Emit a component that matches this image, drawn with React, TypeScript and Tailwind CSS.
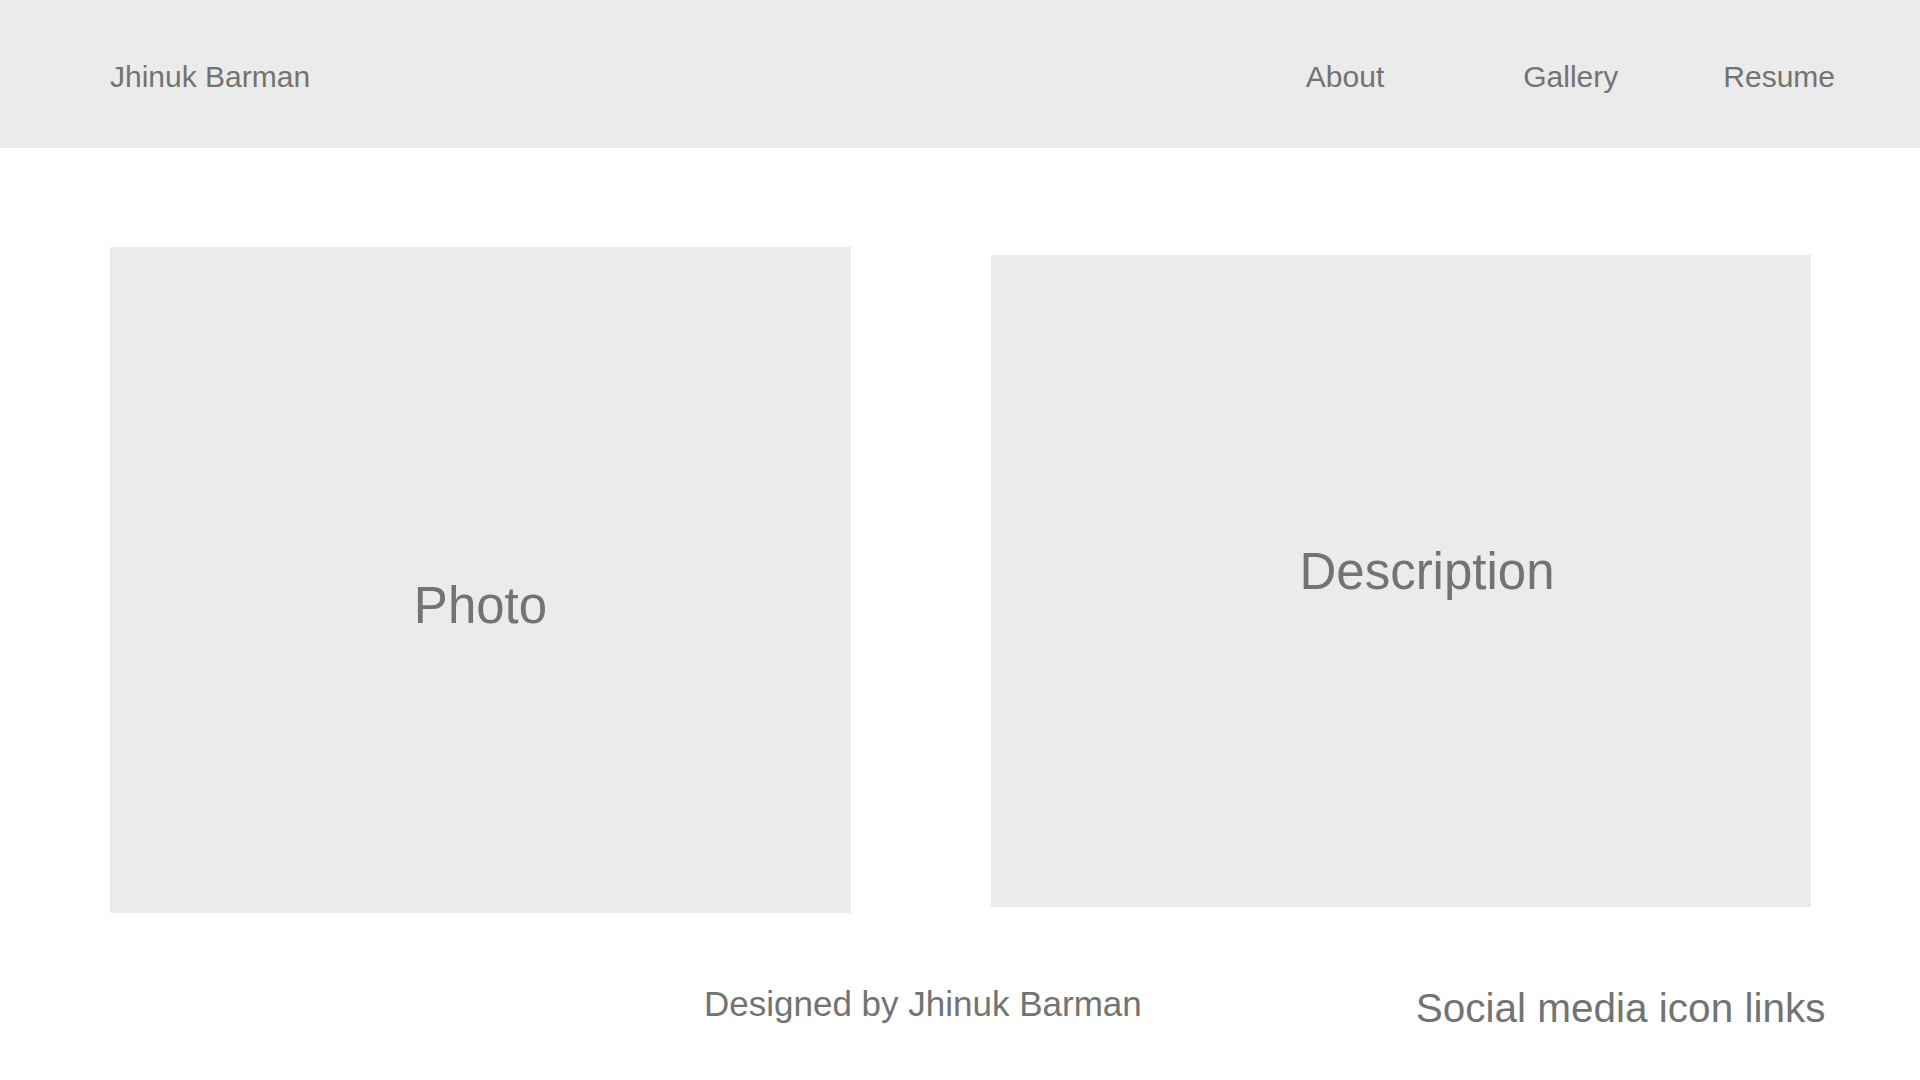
export default function App() {
  return (
    <div className="w-[1920px] h-[1080px] bg-white text-[#737373] font-['Liberation_Sans',Arial,sans-serif] overflow-hidden">
      <header className="h-[148px] bg-[#ebebeb] flex items-center pt-[5px] pl-[110px] pr-[85px]">
        <span className="text-[30px] leading-none">Jhinuk Barman</span>
        <nav className="ml-auto flex text-[30px] leading-none">
          <a>About</a>
          <a className="ml-[139px]">Gallery</a>
          <a className="ml-[105px]">Resume</a>
        </nav>
      </header>

      <main className="flex items-start pt-[99px] pl-[110px]">
        <div className="w-[741px] h-[666px] bg-[#ebebeb] flex items-center justify-center pt-[50px]">
          <span className="text-[51px] leading-none">Photo</span>
        </div>
        <div className="ml-[140px] mt-[8px] w-[820px] h-[652px] bg-[#ebebeb] flex items-center justify-center pl-[52px] pb-[20px]">
          <span className="text-[51px] leading-none">Description</span>
        </div>
      </main>

      <footer className="flex items-start pt-[73px] pl-[704px]">
        <span className="text-[35px] leading-none">Designed by Jhinuk Barman</span>
        <span className="ml-[274px] mt-[2px] text-[40.5px] leading-none">Social media icon links</span>
      </footer>
    </div>
  );
}
